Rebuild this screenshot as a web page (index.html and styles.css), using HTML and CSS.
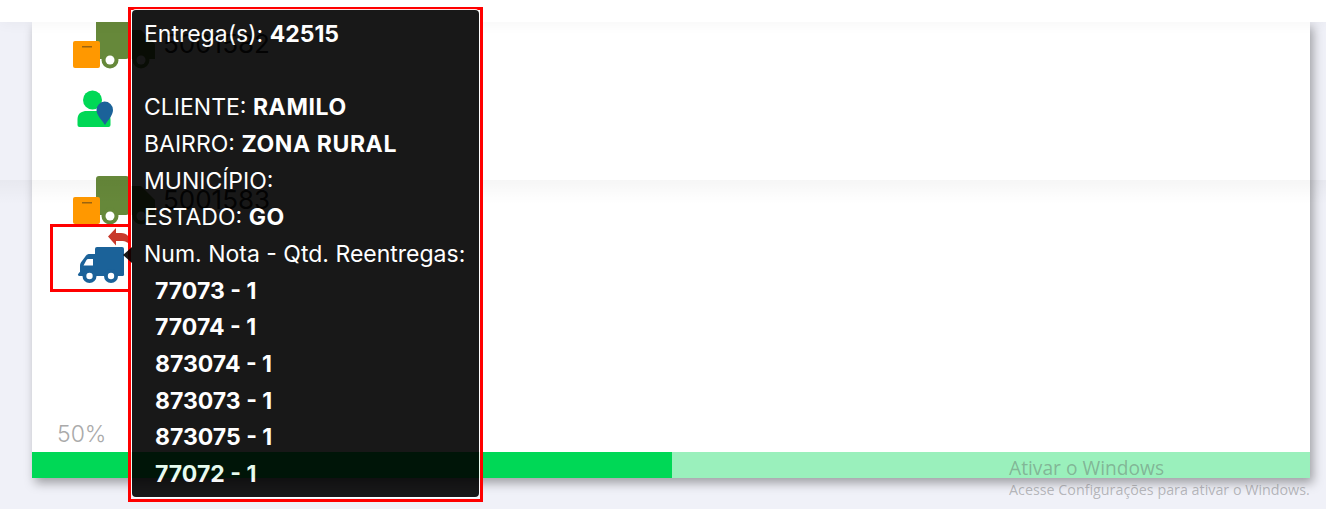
FILE: index.html
```html
<!DOCTYPE html>
<html lang="en">
<head>
  <meta charset="UTF-8" />
  <title>Entregas</title>
  <link rel="stylesheet" href="styles.css">
</head>
<body>

  <div class="topbar"></div>

  <div class="card">
    <div class="list">

      <div class="row">
        <div class="row-head">
          <svg class="icon-truck" width="84" height="50" viewBox="0 0 84 50">
            <rect x="23" y="0" width="33" height="39" rx="3" fill="#66883a" />
            <path d="M57 10h11l14 14v15H57z" fill="#66883a" />
            <circle cx="37" cy="40" r="8.500" fill="#66883a" />
            <circle cx="37" cy="40" r="4.500" fill="#fff" />
            <circle cx="68" cy="40" r="8.500" fill="#66883a" />
            <circle cx="68" cy="40" r="4.500" fill="#fff" />
            <rect x="0" y="21" width="27" height="27" rx="2" fill="#ff9800" />
            <rect x="9" y="26" width="10" height="1.500" fill="#9a6410" />
          </svg>
          <span class="row-number">5001582</span>
        </div>
        <div class="status">
          <svg class="icon-status" width="46" height="38" viewBox="2.500 0 46 38">
            <circle cx="16" cy="10" r="9.500" fill="#00d856" />
            <path d="M3 37a2 2 0 0 1-2-2v-6c0-6 5-8 9-8h12c8 0 12 3 12 9v5a2 2 0 0 1-2 2z" fill="#00d856" />
            <path d="M28 11.500a8.500 8.500 0 0 1 8.500 8.500c0 5-4 9-8 15-4-6-8.500-10-8.500-15a8.500 8.500 0 0 1 8-8.500z" fill="#1b6299" />
          </svg>
        </div>
      </div>

      <div class="row">
        <div class="row-head">
          <svg class="icon-truck" width="84" height="50" viewBox="0 0 84 50">
            <rect x="23" y="0" width="33" height="39" rx="3" fill="#66883a" />
            <path d="M57 10h11l14 14v15H57z" fill="#66883a" />
            <circle cx="37" cy="40" r="8.500" fill="#66883a" />
            <circle cx="37" cy="40" r="4.500" fill="#fff" />
            <circle cx="68" cy="40" r="8.500" fill="#66883a" />
            <circle cx="68" cy="40" r="4.500" fill="#fff" />
            <rect x="0" y="21" width="27" height="27" rx="2" fill="#ff9800" />
            <rect x="9" y="26" width="10" height="1.500" fill="#9a6410" />
          </svg>
          <span class="row-number">5001583</span>
        </div>
        <div class="status status-active">
          <svg class="icon-status" width="46" height="38" viewBox="0 0 46 38">
            <path d="M18 1h25a2 2 0 0 1 2 2v25a1 1 0 0 1-1 1H16V3a2 2 0 0 1 2-2z" fill="#1b6299" />
            <path d="M16 8v21H2a1.500 1.500 0 0 1-1-3v-6c0-2 .5-3 2-5l3-4c1-2 2.500-3 5-3zM14 13H9c-.5 0-1 .3-1.500 1l-3 5.500H14z" fill="#1b6299" fill-rule="evenodd" />
            <rect x="-1" y="27" width="46" height="3" rx="1.500" fill="#1b6299" />
            <circle cx="10.500" cy="30" r="7" fill="#1b6299" />
            <circle cx="10.500" cy="30" r="3.200" fill="#fff" />
            <circle cx="32" cy="30" r="7" fill="#1b6299" />
            <circle cx="32" cy="30" r="3.200" fill="#fff" />
          </svg>
          <svg class="icon-return" width="24" height="19" viewBox="0 0 24 19">
            <path d="M0 8.500 8 0v5h5c6 0 10 4 10 13-2-3-5-5-10-5H8v4.500z" fill="#c8392b" />
          </svg>
        </div>
      </div>

    </div>
    <div class="percent">50%</div>
    <div class="progress">
      <div class="progress-done"></div>
    </div>
  </div>

  <div class="band"></div>

  <div class="tooltip-frame">
    <div class="tooltip">
      <div>Entrega(s): <b>42515</b></div>
      <br>
      <div>CLIENTE: <b class="caps">RAMILO</b></div>
      <div>BAIRRO: <b class="caps">ZONA RURAL</b></div>
      <div>MUNICÍPIO:</div>
      <div>ESTADO: <b class="caps">GO</b></div>
      <div>Num. Nota - Qtd. Reentregas:</div>
      <div class="nota"><b>77073 - 1</b></div>
      <div class="nota"><b>77074 - 1</b></div>
      <div class="nota"><b>873074 - 1</b></div>
      <div class="nota"><b>873073 - 1</b></div>
      <div class="nota"><b>873075 - 1</b></div>
      <div class="nota"><b>77072 - 1</b></div>
    </div>
  </div>

  <div class="watermark">
    <div class="watermark-title">Ativar o Windows</div>
    <div class="watermark-text">Acesse Configurações para ativar o Windows.</div>
  </div>

</body>
</html>
```

FILE: styles.css
```css
* {
  box-sizing: border-box;
}

html, body {
  height: 100%;
}

body {
  margin: 0;
  position: relative;
  overflow: hidden;
  display: flex;
  flex-direction: column;
  background: #f0f1f8;
  font-family: Inter, "Liberation Sans", sans-serif;
}

.topbar {
  height: 22px;
  background: #fff;
  position: relative;
  z-index: 2;
  box-shadow: 0 2px 14px rgba(0,0,0,0.04);
}

.card {
  width: 1278px;
  height: 456px;
  margin-left: 32px;
  background: #fff;
  display: flex;
  flex-direction: column;
  box-shadow: 3px 5px 10px rgba(0,0,0,0.35);
}

.list {
  flex: 1;
  overflow: hidden;
}

.row {
  height: 156px;
  padding-left: 41px;
}

.row:first-child {
  margin-top: -2px;
}

.row-head {
  height: 50px;
  display: flex;
  align-items: center;
  gap: 6px;
}

.row-number {
  margin-top: -4px;
  font-size: 26px;
  color: #222;
}

.status {
  position: relative;
  width: 81px;
  height: 68px;
  margin-left: -23px;
  margin-top: -2px;
  padding: 19px 0 0 26px;
  border: 3px solid transparent;
}

.status-active {
  border-color: #f00;
}

.icon-status {
  display: block;
  overflow: visible;
}

.icon-return {
  position: absolute;
  left: 55px;
  top: 1px;
}

.percent {
  padding-left: 25px;
  height: 36px;
  font-size: 23px;
  font-weight: 300;
  line-height: 36px;
  color: #aaa;
}

.progress {
  height: 26px;
  background: #9af0bc;
}

.progress-done {
  width: 640px;
  height: 100%;
  background: #00d856;
}

.band {
  position: absolute;
  left: 0;
  right: 0;
  top: 180px;
  height: 24px;
  background: linear-gradient(rgba(0,0,0,0.035), rgba(0,0,0,0));
}

.tooltip-frame {
  position: absolute;
  z-index: 3;
  left: 128px;
  top: 7px;
  width: 355px;
  height: 495px;
  padding: 0 1px 2px 1px;
  border: 3px solid #f00;
}

.tooltip {
  position: relative;
  height: 100%;
  padding: 6px 10px 0 12px;
  background: #000;
  color: #fff;
  opacity: 0.9;
  border-radius: 4px;
  box-shadow: 0 0 0 1px #fff;
  font-size: 23px;
  line-height: 36.67px;
}

.tooltip::before {
  content: "";
  position: absolute;
  left: -9px;
  top: 237px;
  border-top: 8px solid transparent;
  border-bottom: 8px solid transparent;
  border-right: 9px solid #000;
}

.caps {
  letter-spacing: 0.6px;
}

.nota {
  padding-left: 11px;
}

.watermark {
  position: absolute;
  left: 1009px;
  top: 456px;
  color: rgba(90,90,90,0.4);
  font-family: "Open Sans", sans-serif;
}

.watermark-title {
  font-size: 19.2px;
  line-height: 24px;
}

.watermark-text {
  font-size: 14.3px;
  line-height: 20px;
}
```
